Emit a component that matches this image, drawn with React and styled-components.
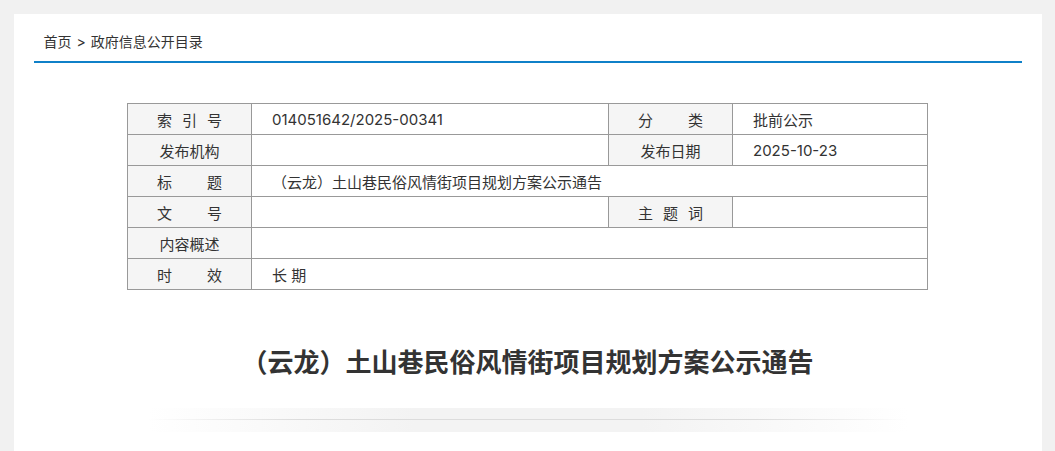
import React from 'react'
import styled, { createGlobalStyle } from 'styled-components'

const GlobalStyle = createGlobalStyle`
  html, body {
    margin: 0;
    padding: 0;
    background: #f1f1f1;
    font-family: Inter, "Noto Sans CJK SC", sans-serif;
    color: #333;
  }
`

const Panel = styled.div`
  width: 1028px;
  margin: 14px auto 0;
  background: #fff;
  padding: 0 20px 40px;
  box-sizing: border-box;
  min-height: 460px;
`

const Crumb = styled.div`
  padding: 18px 0 9px 10px;
  font-size: 14px;
  line-height: 20px;
  color: #333;
  border-bottom: 2px solid #0f80c8;

  span {
    margin: 0 5px;
  }
`

const Table = styled.table`
  width: 800px;
  margin: 40px auto 0;
  border-collapse: collapse;
  table-layout: fixed;
  font-size: 15px;
`

const Label = styled.td`
  height: 30px;
  padding: 0;
  border: 1px solid #999;
  background: #f5f5f5;
  text-align: center;
  white-space: nowrap;

  span {
    letter-spacing: ${(p) => p.$sp || 0}px;
    margin-right: -${(p) => p.$sp || 0}px;
  }
`

const Value = styled.td`
  height: 30px;
  padding: 0 0 0 20px;
  border: 1px solid #999;
  text-align: left;
  white-space: nowrap;
`

const Title = styled.h1`
  margin: 53px 0 0;
  text-align: center;
  font-size: 26px;
  line-height: 36px;
  font-weight: bold;
  color: #333;
  font-family: "Noto Sans CJK SC", sans-serif;
`

const Divider = styled.div`
  position: relative;
  width: 760px;
  height: 24px;
  margin: 29px auto 0;
  background: linear-gradient(
    to right,
    rgba(240, 240, 240, 0),
    #f3f3f3 35%,
    #f3f3f3 65%,
    rgba(240, 240, 240, 0)
  );

  &::after {
    content: '';
    position: absolute;
    left: 0;
    right: 0;
    top: 11px;
    height: 1px;
    background: linear-gradient(
      to right,
      rgba(220, 220, 220, 0),
      #dcdcdc 20%,
      #dcdcdc 80%,
      rgba(220, 220, 220, 0)
    );
  }
`

export default function App() {
  return (
    <>
      <GlobalStyle />
      <Panel>
        <Crumb>
          首页<span>&gt;</span>政府信息公开目录
        </Crumb>
        <Table>
          <colgroup>
            <col style={{ width: 124 }} />
            <col style={{ width: 357 }} />
            <col style={{ width: 124 }} />
            <col style={{ width: 195 }} />
          </colgroup>
          <tbody>
            <tr>
              <Label $sp={10}><span>索引号</span></Label>
              <Value>014051642/2025-00341</Value>
              <Label $sp={35}><span>分类</span></Label>
              <Value>批前公示</Value>
            </tr>
            <tr>
              <Label><span>发布机构</span></Label>
              <Value></Value>
              <Label><span>发布日期</span></Label>
              <Value>2025-10-23</Value>
            </tr>
            <tr>
              <Label $sp={35}><span>标题</span></Label>
              <Value colSpan={3}>（云龙）土山巷民俗风情街项目规划方案公示通告</Value>
            </tr>
            <tr>
              <Label $sp={35}><span>文号</span></Label>
              <Value></Value>
              <Label $sp={10}><span>主题词</span></Label>
              <Value></Value>
            </tr>
            <tr>
              <Label><span>内容概述</span></Label>
              <Value colSpan={3}></Value>
            </tr>
            <tr>
              <Label $sp={35}><span>时效</span></Label>
              <Value colSpan={3}>长 期</Value>
            </tr>
          </tbody>
        </Table>
        <Title>（云龙）土山巷民俗风情街项目规划方案公示通告</Title>
        <Divider />
      </Panel>
    </>
  )
}
